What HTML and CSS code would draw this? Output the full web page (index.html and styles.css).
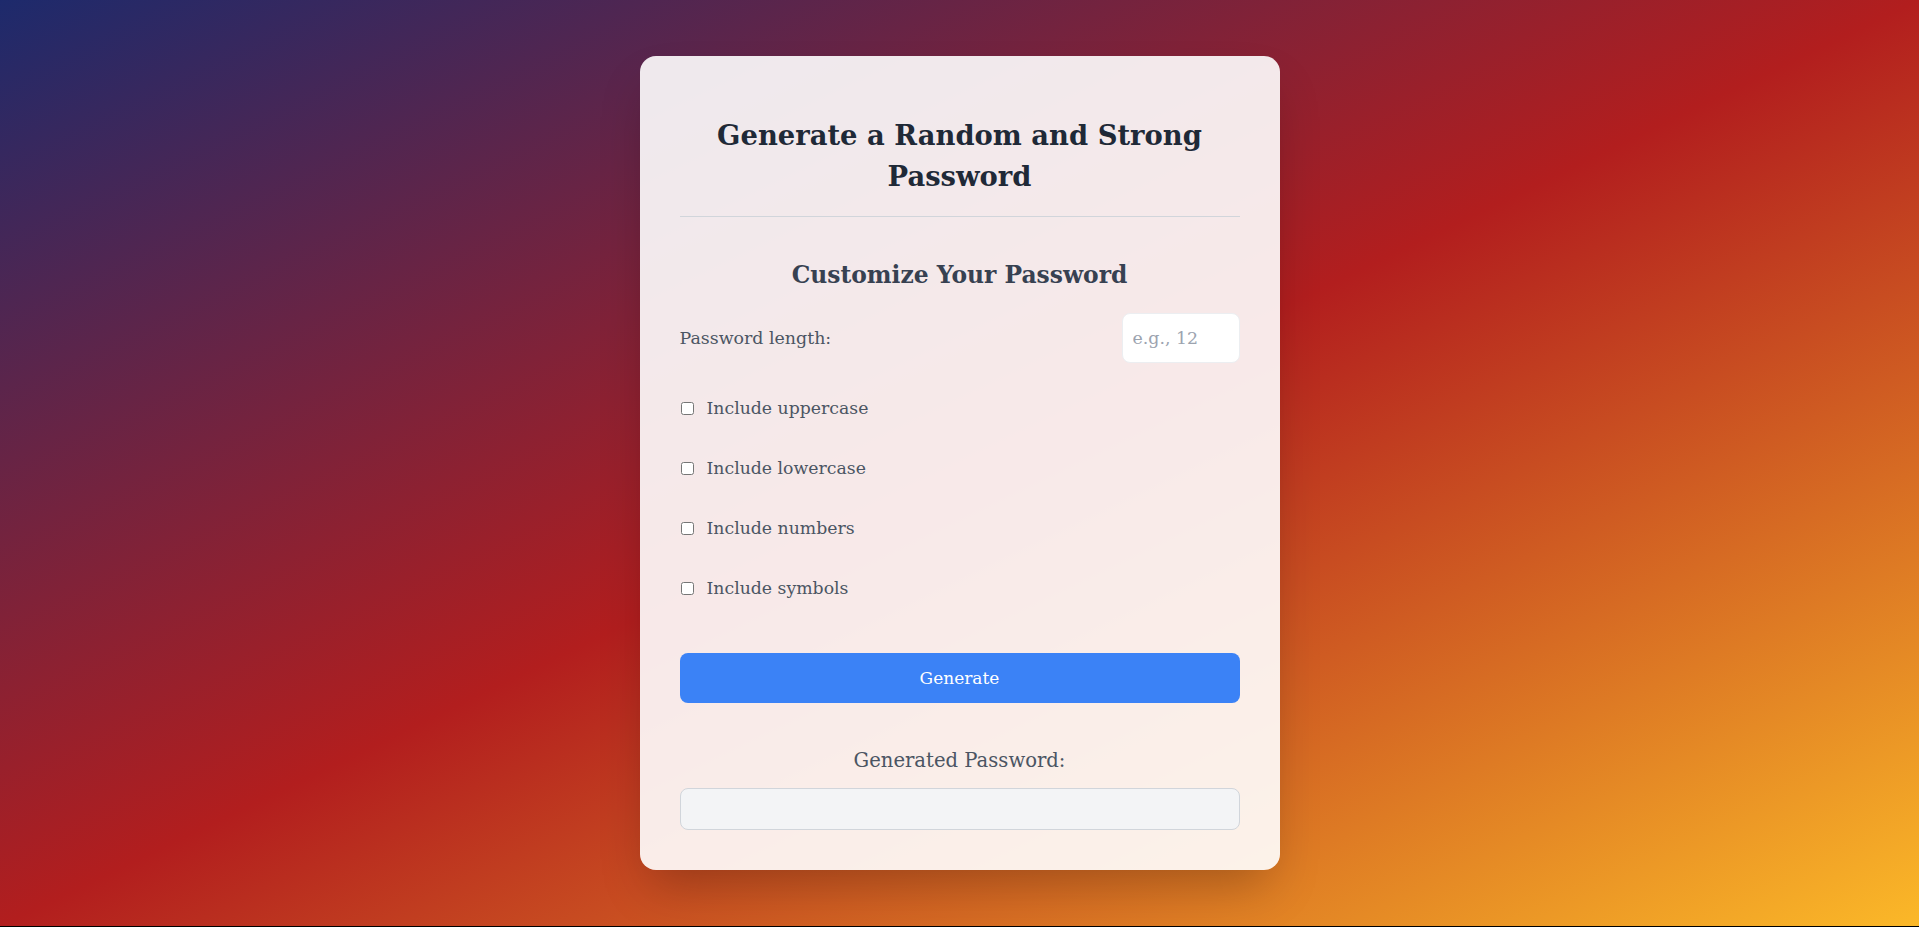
FILE: index.html
```html
<!DOCTYPE html>
<html lang="en">
<head>
<meta charset="UTF-8">
<title>Password Generator</title>
<link rel="stylesheet" href="styles.css">
</head>
<body>
  <main class="card">
    <h1 class="title">Generate a Random and Strong Password</h1>
    <h2 class="subtitle">Customize Your Password</h2>
    <div class="length-row">
      <label class="label" for="len">Password length:</label>
      <input id="len" class="length-input" type="number" placeholder="e.g., 12">
    </div>
    <div class="options">
      <label class="option"><input type="checkbox" class="check"><span>Include uppercase</span></label>
      <label class="option"><input type="checkbox" class="check"><span>Include lowercase</span></label>
      <label class="option"><input type="checkbox" class="check"><span>Include numbers</span></label>
      <label class="option"><input type="checkbox" class="check"><span>Include symbols</span></label>
    </div>
    <button class="generate" type="button">Generate</button>
    <h3 class="result-title">Generated Password:</h3>
    <div class="result"></div>
  </main>
</body>
</html>
```
FILE: styles.css
```css
html {
  background: #000;
}
body {
  margin: 0;
  height: 926px;
  box-sizing: border-box;
  padding-top: 56px;
  display: flex;
  justify-content: center;
  align-items: flex-start;
  background: linear-gradient(to bottom right, #1d2a6c 0%, #b21e1e 50%, #fbb828 100%);
  font-family: "DejaVu Serif", Georgia, serif;
}
.card {
  width: 640px;
  box-sizing: border-box;
  padding: 59px 40px 40px;
  background: rgba(255, 255, 255, 0.9);
  border-radius: 16px;
  box-shadow: 0 25px 50px -12px rgba(0, 0, 0, 0.25);
  display: flex;
  flex-direction: column;
}
.title {
  margin: 0;
  padding-bottom: 19px;
  border-bottom: 1px solid #d1d5db;
  text-align: center;
  font-size: 27.4px;
  line-height: 41px;
  font-weight: 700;
  color: #1f2937;
}
.subtitle {
  margin: 42px 0 0;
  text-align: center;
  font-size: 23.4px;
  line-height: 32px;
  font-weight: 700;
  color: #374151;
}
.length-row {
  margin-top: 22px;
  display: flex;
  justify-content: space-between;
  align-items: center;
}
.label {
  font-size: 17.4px;
  line-height: 28px;
  color: #4b5563;
}
.length-input {
  width: 118px;
  height: 50px;
  box-sizing: border-box;
  padding: 0 10px;
  border: 1px solid #eceef1;
  border-radius: 8px;
  background: #fff;
  font-family: inherit;
  font-size: 17.4px;
  color: #374151;
  outline: none;
}
.length-input::placeholder {
  color: #9ca3af;
}
.options {
  margin-top: 31px;
  display: flex;
  flex-direction: column;
  gap: 32px;
}
.option {
  display: flex;
  align-items: center;
  height: 28px;
  font-size: 17.3px;
  color: #4b5563;
}
.check {
  width: 13px;
  height: 13px;
  margin: 0 13px 0 1px;
}
.generate {
  margin-top: 51px;
  height: 50px;
  border: none;
  border-radius: 8px;
  background: #3b82f6;
  color: #fff;
  font-family: inherit;
  font-size: 17px;
  cursor: pointer;
}
.result-title {
  margin: 44px 0 0;
  text-align: center;
  font-size: 19.6px;
  line-height: 28px;
  font-weight: 400;
  color: #4b5563;
}
.result {
  margin-top: 13px;
  height: 42px;
  box-sizing: border-box;
  border: 1px solid #d1d5db;
  border-radius: 8px;
  background: #f3f4f6;
}
```
